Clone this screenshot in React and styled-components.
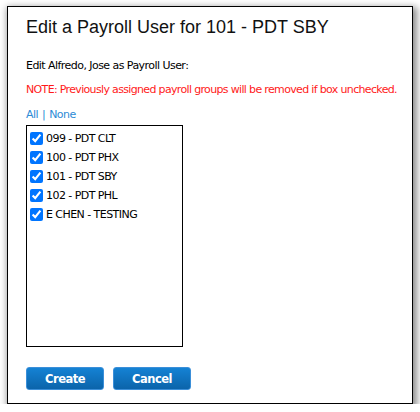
import React, { useState } from 'react';
import styled, { createGlobalStyle } from 'styled-components';

const GlobalStyle = createGlobalStyle`
  html, body {
    margin: 0;
    padding: 0;
    background: #ffffff;
  }
`;

const Dialog = styled.div`
  box-sizing: border-box;
  width: 406px;
  height: 398px;
  margin: 6px 0 0 7px;
  padding: 9px 10px 0 18px;
  background: #ffffff;
  border: 1px solid #000;
  box-shadow: 2px 3px 7px 2px rgba(0, 0, 0, 0.45);
  display: flex;
  flex-direction: column;
  font-family: "DejaVu Sans", sans-serif;
  font-size: 11px;
  letter-spacing: -0.55px;
  color: #000;
`;

const Title = styled.h2`
  margin: 0;
  font-family: "Liberation Sans", Arial, sans-serif;
  font-weight: normal;
  font-size: 18px;
  letter-spacing: 0;
  line-height: 22px;
  color: #111;
`;

const Text = styled.p`
  margin: ${p => p.top}px 0 0 0;
  line-height: 14px;
  white-space: nowrap;
  color: ${p => (p.warn ? '#ff1a1a' : '#000')};
  letter-spacing: ${p => (p.warn ? '-0.66px' : '-0.55px')};
`;

const LinkRow = styled.div`
  margin-top: 11px;
  line-height: 14px;
  color: #2e8bd6;
  display: flex;
  gap: 4px;
`;

const LinkBtn = styled.a`
  color: #2e8bd6;
  text-decoration: none;
  cursor: pointer;
`;

const ListBox = styled.div`
  box-sizing: border-box;
  flex-shrink: 0;
  width: 157px;
  height: 222px;
  margin-top: 3px;
  border: 1px solid #000;
  padding: 3px 0 0 3px;
  display: flex;
  flex-direction: column;
`;

const Item = styled.label`
  display: flex;
  align-items: center;
  height: 19px;
  gap: 3px;
  cursor: pointer;
`;

const Check = styled.input`
  width: 13px;
  height: 13px;
  margin: 0;
  accent-color: #0075ff;
`;

const ButtonRow = styled.div`
  display: flex;
  flex-shrink: 0;
  gap: 9px;
  margin-top: 20px;
`;

const Button = styled.button`
  box-sizing: border-box;
  width: 78px;
  height: 23px;
  border: 1px solid #3b8fd9;
  border-radius: 3px;
  background: linear-gradient(#1582d4, #0b64aa);
  color: #fff;
  font-family: "DejaVu Sans", sans-serif;
  font-weight: bold;
  font-size: 11.5px;
  letter-spacing: -0.5px;
  padding: 0;
  cursor: pointer;
`;

const groups = ['099 - PDT CLT', '100 - PDT PHX', '101 - PDT SBY', '102 - PDT PHL', 'E CHEN - TESTING'];

export default function App() {
  const [checked, setChecked] = useState(groups.map(() => true));

  const setAll = v => setChecked(groups.map(() => v));

  return (
    <>
      <GlobalStyle />
      <Dialog>
        <Title>Edit a Payroll User for 101 - PDT SBY</Title>
        <Text top={21}>Edit Alfredo, Jose as Payroll User:</Text>
        <Text top={10} warn>NOTE: Previously assigned payroll groups will be removed if box unchecked.</Text>
        <LinkRow>
          <LinkBtn onClick={() => setAll(true)}>All</LinkBtn>
          <span>|</span>
          <LinkBtn onClick={() => setAll(false)}>None</LinkBtn>
        </LinkRow>
        <ListBox>
          {groups.map((g, i) => (
            <Item key={g}>
              <Check
                type="checkbox"
                checked={checked[i]}
                onChange={() => setChecked(checked.map((c, j) => (j === i ? !c : c)))}
              />
              {g}
            </Item>
          ))}
        </ListBox>
        <ButtonRow>
          <Button>Create</Button>
          <Button>Cancel</Button>
        </ButtonRow>
      </Dialog>
    </>
  );
}
